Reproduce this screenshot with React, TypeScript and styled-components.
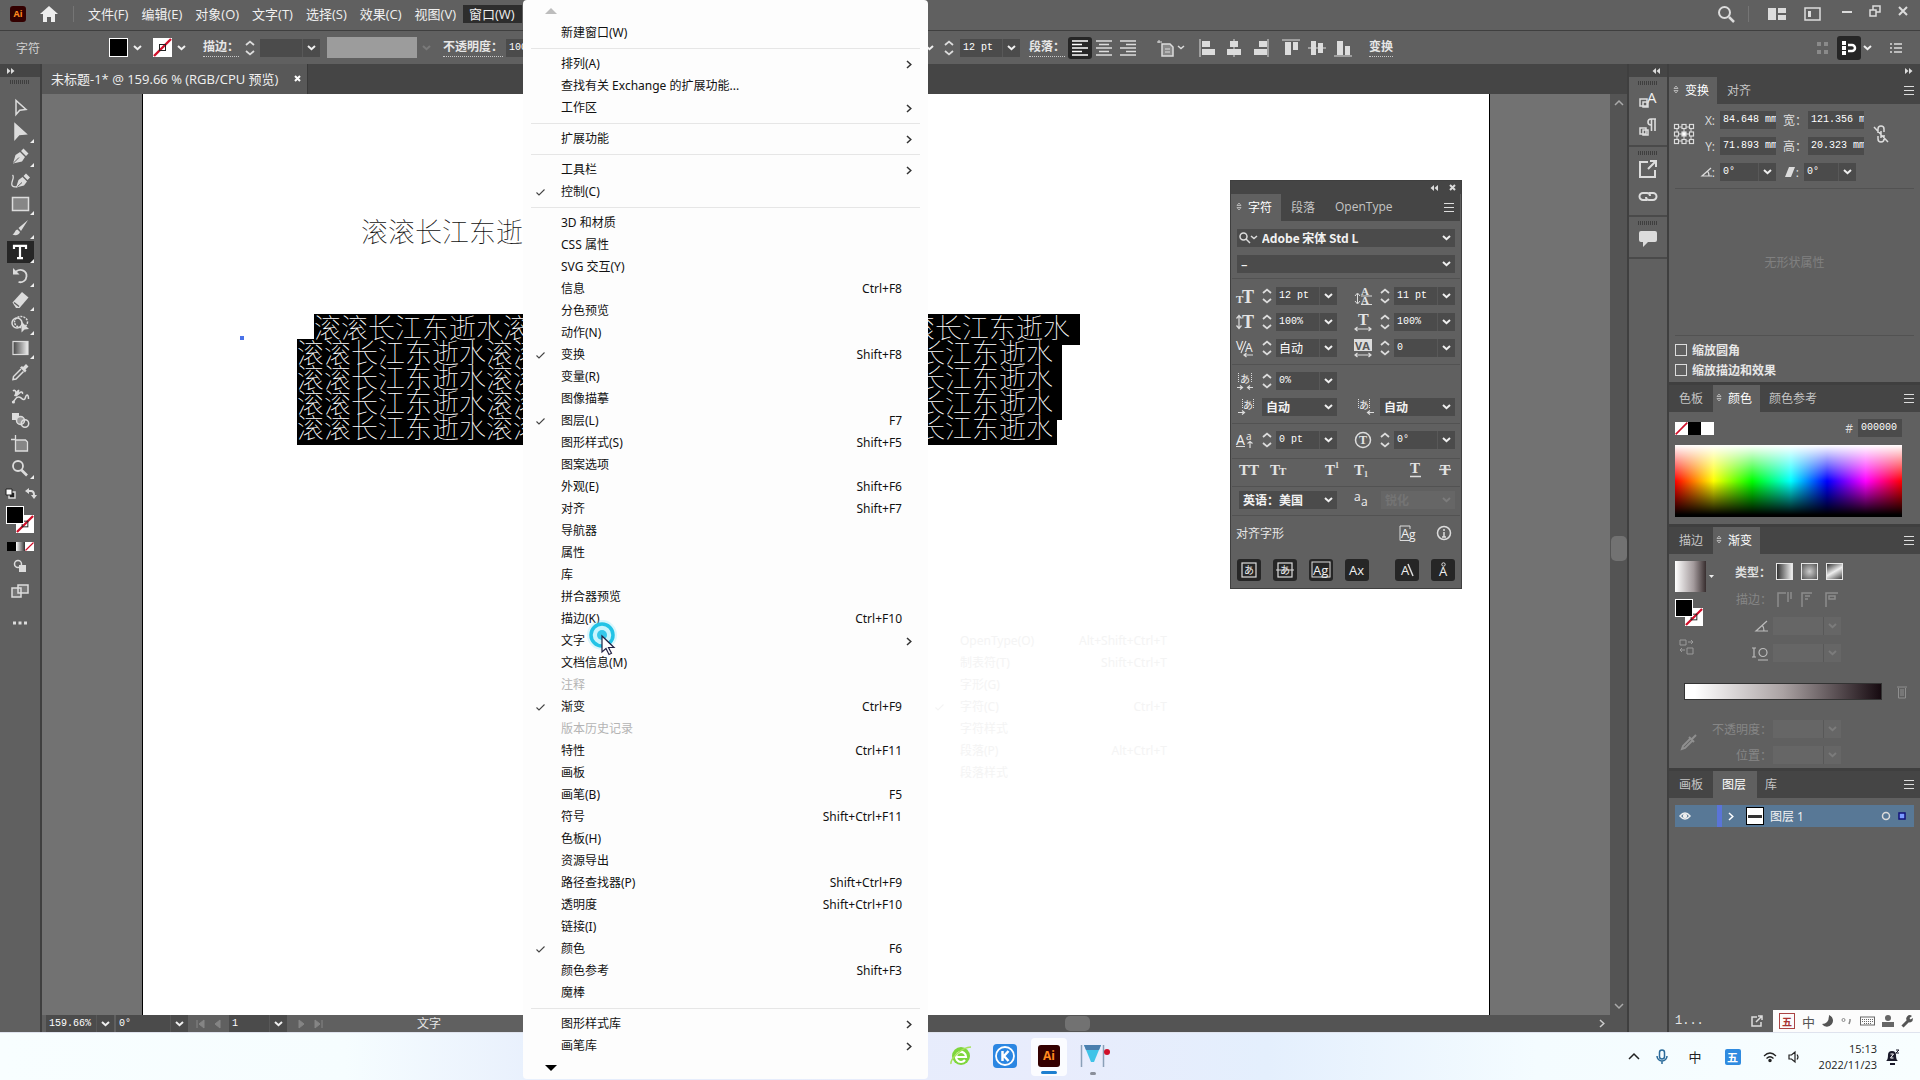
import React, { ReactNode } from "react";
import styled, { createGlobalStyle, css } from "styled-components";

const ui = `"Open Sans", "Noto Sans CJK SC", sans-serif`;
const mono = `"Liberation Mono", "Noto Sans CJK SC", monospace`;
const c = {
  panel: "#606060",
  bar: "#454545",
  field: "#4b4b4b",
  line: "#3f3f3f",
  edge: "#525252",
  text: "#e6e6e6",
  dim: "#868686",
};

const GlobalStyle = createGlobalStyle`
  * { box-sizing: border-box; }
  body { margin: 0; overflow: hidden; background: #707070; font-family: ${ui}; font-size: 12px; color: ${c.text}; }
  button, input, select { font: inherit; color: inherit; border: 0; padding: 0; margin: 0; background: none; }
  ul { list-style: none; margin: 0; padding: 0; }
`;

/* ---------- shell ---------- */
const Page = styled.div`
  display: flex;
  flex-direction: column;
  height: 100vh;
  position: relative;
`;
const Center = css`
  display: flex;
  align-items: center;
  justify-content: center;
`;
const Svg = styled.svg`
  display: block;
  flex: none;
  overflow: visible;
`;
const IconButton = styled.button<{ $w?: number; $h?: number; $on?: boolean }>`
  ${Center}
  flex: none;
  width: ${(p) => p.$w ?? 24}px;
  height: ${(p) => p.$h ?? 22}px;
  border-radius: 3px;
  background: ${(p) => (p.$on ? "#262626" : "transparent")};
`;

type IconProps = { w?: number; h?: number; children: ReactNode; color?: string };
const Icon = ({ w = 18, h = 18, children, color = "#dcdcdc" }: IconProps) => (
  <Svg width={w} height={h} viewBox={`0 0 ${w} ${h}`} fill="none" stroke={color} strokeWidth="1.5" aria-hidden="true">
    {children}
  </Svg>
);
const Chevron = ({ color = "#f0f0f0" }: { color?: string }) => (
  <Icon w={9} h={6} color={color}>
    <path d="M1 1l3.5 3.2L8 1" strokeWidth="2" />
  </Icon>
);
const RightChevron = ({ color = "#333" }: { color?: string }) => (
  <Icon w={6} h={9} color={color}>
    <path d="M1 1l3.8 3.5L1 8" />
  </Icon>
);
const Stepper = () => (
  <Icon w={10} h={16}>
    <path d="M1 5l4-3.4L9 5M1 11l4 3.4L9 11" strokeWidth="1.8" />
  </Icon>
);
const Burger = () => (
  <Icon w={10} h={9}>
    <path d="M0 .5h10M0 4.5h10M0 8.5h10" strokeWidth="1" />
  </Icon>
);
const TabArrows = () => (
  <Icon w={6} h={9} color="#b5b5b5">
    <path d="M1 3.5L3 1l2 2.5zM1 5.5L3 8l2-2.5z" strokeWidth="1" />
  </Icon>
);
const DoubleArrow = ({ left }: { left?: boolean }) => (
  <Icon w={8} h={6}>
    {left ? (
      <path d="M4 0v6L.5 3zM8 0v6L4.500 3z" fill="#dcdcdc" stroke="none" />
    ) : (
      <path d="M0 0v6l3.500-3zM4 0v6l3.500-3z" fill="#dcdcdc" stroke="none" />
    )}
  </Icon>
);
const Grip = styled.div`
  width: 20px;
  height: 4px;
  margin: 0 auto;
  background: repeating-linear-gradient(90deg, #3e3e3e 0 1px, transparent 1px 2px);
`;

/* ---------- menu bar ---------- */
const MenuBar = styled.header`
  display: flex;
  align-items: center;
  flex: none;
  height: 31px;
  padding: 0 0 3px 10px;
  background: ${c.panel};
  border-bottom: 1px solid ${c.line};
`;
const AiMark = styled.span<{ $s: number }>`
  ${Center}
  flex: none;
  width: ${(p) => p.$s}px;
  height: ${(p) => p.$s}px;
  border-radius: 3px;
  background: #330000;
  color: #ff8a1e;
  font-weight: 700;
  font-size: ${(p) => (p.$s > 18 ? 12 : 9)}px;
  line-height: 1;
`;
const Rule = styled.span<{ $m: number }>`
  width: 1px;
  height: 16px;
  margin: 0 ${(p) => p.$m}px;
  background: #757575;
`;
const MenuTitle = styled.button<{ $on?: boolean }>`
  height: 18px;
  padding: 0 7px 0 6px;
  font-size: 13px;
  line-height: 16px;
  white-space: nowrap;
  color: #f0f0f0;
  background: ${(p) => (p.$on ? "#2d2d2d" : "transparent")};
`;
const Push = styled.div`
  display: flex;
  align-items: center;
  margin-left: auto;
`;
const WindowKeys = styled.div`
  display: flex;
  align-self: flex-start;
`;

/* ---------- control bar ---------- */
const ControlBar = styled.div`
  display: flex;
  align-items: center;
  flex: none;
  height: 33px;
  background: ${c.panel};
`;
const ControlLeft = styled.div`
  display: flex;
  align-items: center;
  flex: none;
  width: 920px;
  padding-left: 16px;
`;
const Cluster = styled.div<{ $r: number }>`
  display: flex;
  align-items: center;
  flex: none;
  margin-right: ${(p) => p.$r}px;
`;
const ContextName = styled.span`
  width: 93px;
  color: #d0d0d0;
`;
const LinkLabel = styled.label`
  height: 18px;
  line-height: 16px;
  font-weight: 700;
  white-space: nowrap;
  color: inherit;
  text-decoration: none;
  border-bottom: 1px dotted #c8c8c8;
`;
const Swatch = styled.span<{ $s?: number }>`
  display: block;
  flex: none;
  width: ${(p) => p.$s ?? 19}px;
  height: ${(p) => p.$s ?? 19}px;
  background: #000;
  border: 1px solid #fff;
`;
const NoneSwatch = ({ s = 19, hole = true }: { s?: number; hole?: boolean }) => (
  <Svg width={s} height={s} viewBox="0 0 19 19" aria-hidden="true">
    <rect width="19" height="19" fill="#fff" />
    <path d="M1 18L18 1" stroke="#d0102a" strokeWidth="2.4" />
    {hole && <rect x="6.500" y="6.500" width="6" height="6" fill="none" stroke="#222" />}
  </Svg>
);
const StyleBox = styled.span`
  width: 90px;
  height: 21px;
  background: #9c9c9c;
`;
const FieldBox = styled.div<{ $w: number; $off?: boolean }>`
  display: flex;
  align-items: center;
  flex: none;
  position: relative;
  width: ${(p) => p.$w}px;
  height: 18px;
  background: ${(p) => (p.$off ? "#666" : c.field)};
  input {
    flex: 1;
    min-width: 0;
    height: 18px;
    padding: 0 0 1px 3px;
    font-family: ${mono};
    font-size: 10px;
    color: #fff;
  }
  input.cjk { font-size: 12px; }
  select {
    appearance: none;
    flex: 1;
    min-width: 0;
    height: 18px;
    padding: 0 0 0 4px;
    font-family: "Noto Sans CJK SC", sans-serif;
    font-size: 12px;
    line-height: 18px;
    font-weight: 700;
    color: ${(p) => (p.$off ? "#747474" : "#f2f2f2")};
    opacity: 1;
  }
`;
const Drop = styled.button`
  ${Center}
  flex: none;
  width: 18px;
  height: 18px;
  border-left: 1px solid #585858;
`;
const DropMark = styled.span`
  ${Center}
  flex: none;
  width: 18px;
  pointer-events: none;
`;

type FieldProps = { label: string; value: string; w: number; drop?: boolean; off?: boolean; cjk?: boolean };
const Field = ({ label, value, w, drop = true, off, cjk }: FieldProps) => (
  <FieldBox $w={w} $off={off}>
    <input aria-label={label} defaultValue={value} disabled={off} className={cjk ? "cjk" : undefined} />
    {drop && (
      <Drop aria-label={`${label}选项`} disabled={off}>
        <Chevron color={off ? "#7c7c7c" : undefined} />
      </Drop>
    )}
  </FieldBox>
);
const Choice = ({ label, value, w, off }: FieldProps) => (
  <FieldBox $w={w} $off={off}>
    <select aria-label={label} disabled={off}>
      <option>{value}</option>
    </select>
    <DropMark>
      <Chevron color={off ? "#7c7c7c" : undefined} />
    </DropMark>
  </FieldBox>
);

const alignShapes: [string, string][] = [
  ["左对齐", "M1 0v18|M3 2h8v6H3zM3 10h13v6H3z"],
  ["水平居中", "M9 0v18|M5 2h8v6H5zM2 10h14v6H2z"],
  ["右对齐", "M17 0v18|M8 2h8v6H8zM3 10h13v6H3z"],
  ["顶对齐", "M0 1h18|M3 3h6v13H3zM11 3h5v8h-5z"],
  ["垂直居中", "M0 9h18|M3 2h5v14H3zM10 4h5v10h-5z"],
  ["底对齐", "M0 17h18|M3 2h6v14H3zM11 7h5v9h-5z"],
];

/* ---------- workspace ---------- */
const Workspace = styled.div`
  display: flex;
  flex: 1;
  min-height: 0;
`;
const Strip = styled.div<{ $right?: boolean }>`
  display: flex;
  align-items: center;
  justify-content: ${(p) => (p.$right ? "flex-end" : "flex-start")};
  flex: none;
  height: 13px;
  padding: 0 7px;
  background: ${c.bar};
`;
const Toolbox = styled.nav`
  display: flex;
  flex-direction: column;
  flex: none;
  width: 42px;
  background: ${c.panel};
  border-right: 2px solid ${c.line};
`;
const ToolTop = styled.div`
  padding-top: 3px;
`;
const ToolList = styled.div`
  display: flex;
  flex-direction: column;
  align-items: center;
  padding-top: 12px;
`;
const Tool = styled.button<{ $on?: boolean }>`
  ${Center}
  position: relative;
  width: 27px;
  height: 24px;
  background: ${(p) => (p.$on ? "#262626" : "transparent")};
  background-clip: content-box;
  padding: 1px 0;
`;
const Corner = styled.i`
  position: absolute;
  right: 0;
  bottom: 1px;
  border: 2px solid transparent;
  border-right-color: #eee;
  border-bottom-color: #eee;
`;
const SmallPair = styled.div`
  display: flex;
  justify-content: space-between;
  width: 31px;
  margin-top: 8px;
`;
const PaintPair = styled.div`
  position: relative;
  width: 28px;
  height: 28px;
  margin-top: 7px;
`;
const Layered = styled.span<{ $x: number; $y: number }>`
  position: absolute;
  left: ${(p) => p.$x}px;
  top: ${(p) => p.$y}px;
`;
const Modes = styled.div`
  display: flex;
  width: 27px;
  height: 9px;
  margin-top: 8px;
  span { flex: 1; background: #000; }
  span + span { background: linear-gradient(90deg, #fff, #333); }
`;
const ModeTool = styled.button<{ $t?: number }>`
  ${Center}
  width: 27px;
  height: 25px;
  margin-top: ${(p) => p.$t ?? 0}px;
`;
const Document = styled.main`
  display: flex;
  flex-direction: column;
  flex: 1;
  min-width: 0;
`;
const DocTabs = styled.div`
  display: flex;
  flex: none;
  height: 30px;
  background: ${c.bar};
`;
const DocTab = styled.div`
  display: flex;
  align-items: center;
  gap: 16px;
  padding: 0 6px 1px 9px;
  background: #585858;
  border-right: 1px solid #393939;
  white-space: nowrap;
  font-size: 13px;
  color: #f0f0f0;
`;
const DocArea = styled.div`
  display: flex;
  flex: 1;
  min-height: 0;
`;
const Pasteboard = styled.div`
  flex: 1;
  min-width: 0;
  padding: 0 120px 0 100px;
  background: #727272;
`;
const Artboard = styled.div`
  position: relative;
  height: 100%;
  background: #fff;
  border: 1px solid #000;
  border-width: 0 1px;
`;
const song = css`
  font-family: "Noto Sans CJK SC", sans-serif;
  font-weight: 100;
  font-size: 27px;
  white-space: nowrap;
`;
const PointText = styled.div`
  ${song}
  position: absolute;
  left: 218px;
  top: 122px;
  line-height: 30px;
  color: #111;
`;
const AreaText = styled.div`
  position: absolute;
  left: 153px;
  top: 220px;
`;
const TextLine = styled.div<{ $in: number; $pad: number }>`
  ${song}
  width: max-content;
  height: 31px;
  margin: 0 0 -6px ${(p) => p.$in}px;
  padding-right: ${(p) => p.$pad}px;
  line-height: 25px;
  color: #fff;
  background: #000;
`;
const Anchor = styled.span`
  position: absolute;
  left: 97px;
  top: 242px;
  width: 4px;
  height: 4px;
  background: #4a72e8;
`;
const VScroll = styled.div`
  display: flex;
  flex-direction: column;
  align-items: center;
  justify-content: space-between;
  width: 17px;
  padding: 6px 0;
  background: #545454;
`;
const Thumb = styled.span<{ $w: number; $h: number; $b?: number; $l?: number }>`
  flex: none;
  width: ${(p) => p.$w}px;
  height: ${(p) => p.$h}px;
  margin: 0 0 ${(p) => p.$b ?? 0}px ${(p) => p.$l ?? 0}px;
  border-radius: 5px;
  background: #727272;
`;
const Status = styled.footer`
  display: flex;
  align-items: center;
  flex: none;
  height: 17px;
  padding-left: 4px;
  overflow: hidden;
  background: ${c.panel};
`;
const StatusHint = styled.span`
  width: 122px;
  margin-left: 84px;
  line-height: 17px;
`;
const HScroll = styled.div`
  display: flex;
  align-items: center;
  justify-content: space-between;
  flex: 1;
  height: 17px;
  padding: 0 22px 0 0;
  background: #545454;
`;

/* ---------- floating character panel ---------- */
const Floating = styled.section`
  position: absolute;
  left: 1087px;
  top: 86px;
  width: 232px;
  padding: 0 1px;
  background: ${c.panel};
  border: 1px solid ${c.line};
`;
const FloatHead = styled.div`
  display: flex;
  align-items: center;
  justify-content: flex-end;
  gap: 11px;
  height: 13px;
  margin: 0 -1px;
  padding-right: 5px;
  background: ${c.bar};
`;
const Tabs = styled.div`
  display: flex;
  align-items: stretch;
  flex: none;
  height: 27px;
  background: ${c.bar};
`;
const Tab = styled.button<{ $on?: boolean; $l: number; $r: number }>`
  display: flex;
  align-items: center;
  gap: 6px;
  padding: 0 ${(p) => p.$r}px 2px ${(p) => p.$l}px;
  white-space: nowrap;
  color: ${(p) => (p.$on ? "#fff" : "#c4c4c4")};
  background: ${(p) => (p.$on ? c.panel : "transparent")};
`;
const TabMenu = styled.button`
  margin-left: auto;
  padding: 0 6px;
`;
const Section = styled.div<{ $t: number; $b: number }>`
  padding: ${(p) => p.$t}px 4px ${(p) => p.$b}px 0;
  border-bottom: 1px solid ${c.edge};
`;
const Row = styled.div<{ $pad?: number }>`
  display: flex;
  align-items: center;
  height: 26px;
  padding-left: ${(p) => p.$pad ?? 0}px;
`;
const Half = styled.div`
  display: flex;
  align-items: center;
  width: 118px;
  flex: none;
`;
const Cell = styled.span<{ $w: number }>`
  ${Center}
  flex: none;
  width: ${(p) => p.$w}px;
`;
const Between = styled.div<{ $l: number; $r: number; $h: number }>`
  display: flex;
  align-items: center;
  justify-content: space-between;
  height: ${(p) => p.$h}px;
  padding: 0 ${(p) => p.$r}px 0 ${(p) => p.$l}px;
`;
const SnapRow = styled.div`
  display: flex;
  align-items: center;
  justify-content: space-between;
  height: 26px;
  margin: 7px 0 5px;
  padding: 0 5px;
`;
const SearchField = styled(FieldBox)`
  padding-left: 2px;
`;
const GlyphText = ({ x, y, s, children }: { x: number; y: number; s: number; children: ReactNode }) => (
  <text x={x} y={y} fontSize={s} fontFamily="Liberation Serif, serif" fontWeight="700" fill="#e4e4e4" stroke="none">
    {children}
  </text>
);
const SansText = ({ x, y, s, children }: { x: number; y: number; s: number; children: ReactNode }) => (
  <text x={x} y={y} fontSize={s} fontFamily="Open Sans, Noto Sans CJK SC, sans-serif" fill="#f0f0f0" stroke="none">
    {children}
  </text>
);
const Measure = ({ label, icon, value, cjk }: { label: string; icon: ReactNode; value: string; cjk?: boolean }) => (
  <Half>
    <Cell $w={26}><Icon>{icon}</Icon></Cell>
    <Cell $w={18}><Stepper /></Cell>
    <Field label={label} value={value} w={61} cjk={cjk} />
  </Half>
);

/* ---------- dock ---------- */
const Dock = styled.aside`
  display: flex;
  flex-direction: column;
  flex: none;
  width: 42px;
  background: ${c.panel};
  border-left: 2px solid ${c.line};
  border-right: 2px solid ${c.line};
`;
const DockGroup = styled.div`
  padding: 4px 0;
  border-bottom: 2px solid #4a4a4a;
`;
const DockButton = styled.button`
  ${Center}
  width: 38px;
  height: 28px;
`;
const Panels = styled.aside`
  display: flex;
  flex-direction: column;
  flex: none;
  width: 251px;
  background: ${c.panel};
`;
const Panel = styled.section`
  border-bottom: 3px solid ${c.line};
`;
const TransformBody = styled.div`
  display: flex;
  align-items: flex-start;
  padding: 3px 6px 0 5px;
`;
const Tall = styled.div<{ $h: number; $w: number }>`
  ${Center}
  width: ${(p) => p.$w}px;
  height: ${(p) => p.$h}px;
`;
const FieldLabel = styled.label<{ $w: number; $off?: boolean }>`
  display: flex;
  align-items: center;
  justify-content: flex-end;
  flex: none;
  width: ${(p) => p.$w}px;
  padding-right: 5px;
  white-space: nowrap;
  color: ${(p) => (p.$off ? c.dim : "#dedede")};
`;
const WideLabel = styled(FieldLabel)`
  padding-right: 1px;
`;
const Empty = styled.p`
  ${Center}
  height: 148px;
  margin: 3px 6px 0;
  border: 1px solid ${c.edge};
  border-width: 1px 0;
  color: #808080;
`;
const CheckList = styled.div`
  padding: 4px 0 2px;
`;
const Check = styled.label`
  display: flex;
  align-items: center;
  gap: 5px;
  height: 20px;
  padding-left: 6px;
  font-weight: 700;
  input {
    appearance: none;
    width: 12px;
    height: 12px;
    border: 1px solid #dcdcdc;
  }
`;
const ColorBody = styled.div`
  padding: 6px 18px 7px 6px;
`;
const ColorTop = styled.div`
  display: flex;
  align-items: center;
  height: 20px;
  margin-bottom: 7px;
`;
const Chip = styled.span<{ $c: string }>`
  width: 13px;
  height: 13px;
  background: ${(p) => p.$c};
`;
const Spectrum = styled.div`
  height: 72px;
  background: linear-gradient(180deg, #fff 0%, rgba(255, 255, 255, 0) 50%, rgba(0, 0, 0, 0) 50%, #000 97%),
    linear-gradient(90deg, #f00, #ff0 17%, #0f0 34%, #0ff 51%, #00f 67%, #f0f 84%, #f00);
`;
const GradientBody = styled.div`
  display: flex;
  padding: 4px 0 0 6px;
`;
const GradientSide = styled.div`
  width: 40px;
  padding-top: 3px;
`;
const GradRow = styled.div`
  display: flex;
  align-items: center;
  height: 27px;
`;
const GradPreview = styled.div`
  display: flex;
  align-items: center;
  gap: 3px;
  span { width: 31px; height: 31px; background: linear-gradient(90deg, #fff, #a39a9c 60%, #382e2f); }
`;
const TypeSwatch = styled.button<{ $bg: string }>`
  width: 17px;
  height: 17px;
  margin-right: 8px;
  border: 1px solid #e6e6e6;
  background: ${(p) => p.$bg};
`;
const RampRow = styled.div`
  display: flex;
  align-items: center;
  justify-content: space-between;
  padding: 16px 13px 16px 15px;
`;
const Ramp = styled.div`
  width: 198px;
  height: 17px;
  border: 1px solid #333;
  background: linear-gradient(90deg, #fff 5%, #aaa2a3 50%, #160a10);
`;
const GradientFoot = styled.div`
  display: flex;
  padding-left: 6px;
`;
const LayersPanel = styled.section`
  display: flex;
  flex-direction: column;
  flex: 1;
  min-height: 0;
`;
const LayerRow = styled.div`
  display: flex;
  align-items: center;
  height: 22px;
  margin: 7px 6px 0 6px;
  background: #587896;
  color: #f4f4f4;
`;
const LayerFoot = styled.div`
  display: flex;
  align-items: center;
  gap: 47px;
  height: 22px;
  margin-top: auto;
  padding-left: 6px;
  font-family: ${mono};
  font-size: 12px;
`;
const Bar = styled.span`
  width: 5px;
  height: 22px;
  background: #5a74d8;
`;
const LayerThumb = styled.span`
  ${Center}
  width: 18px;
  height: 18px;
  margin-right: 6px;
  background: #fff;
  border: 1px solid #000;
  i { width: 14px; height: 3px; background: #333; }
`;
const Ime = styled.div`
  display: flex;
  align-items: center;
  justify-content: space-between;
  position: absolute;
  right: 0;
  bottom: 48px;
  width: 147px;
  height: 22px;
  padding: 0 6px;
  background: #fcfcfc;
  color: #555;
  font-size: 13px;
`;
const ImeMark = styled.b`
  ${Center}
  width: 16px;
  height: 16px;
  border: 1px solid #a44;
  color: #a33;
  font-size: 10px;
`;

/* ---------- taskbar ---------- */
const Taskbar = styled.footer`
  display: flex;
  align-items: center;
  flex: none;
  height: 48px;
  padding-right: 20px;
  border-top: 1px solid #dfe3ee;
  background: linear-gradient(90deg, #f8feff 0, #f6fdff 18%, #e5edfc 30%, #e8ecfc 55%, #e4effd 66%, #f4fcff 80%, #f8feff);
  color: #222;
`;
const Apps = styled.div`
  display: flex;
  align-items: center;
  flex: 1;
  padding-left: calc(50% - 11px);
`;
const AppButton = styled.button<{ $on?: boolean }>`
  ${Center}
  flex-direction: column;
  gap: 4px;
  width: 36px;
  height: 38px;
  margin: 0 4px;
  padding-top: 5px;
  border-radius: 4px;
  background: ${(p) => (p.$on ? "#fbfcff" : "transparent")};
`;
const Run = styled.i<{ $w: number; $c: string }>`
  width: ${(p) => p.$w}px;
  height: 3px;
  border-radius: 2px;
  background: ${(p) => p.$c};
`;
const Tray = styled.div`
  display: flex;
  align-items: center;
`;
const TrayItem = styled.button<{ $w: number }>`
  ${Center}
  width: ${(p) => p.$w}px;
  height: 30px;
  font-size: 13px;
`;
const Wubi = styled.b`
  ${Center}
  width: 16px;
  height: 16px;
  border-radius: 2px;
  background: #2f8be0;
  color: #fff;
  font-size: 11px;
`;
const Clock = styled.time`
  width: 72px;
  margin-right: 8px;
  text-align: right;
  font-size: 11px;
  line-height: 16px;
`;

/* ---------- window menu ---------- */
const Popup = styled.div<{ $x: number; $y: number; $w: number }>`
  position: absolute;
  left: ${(p) => p.$x}px;
  top: ${(p) => p.$y}px;
  width: ${(p) => p.$w}px;
  font-family: "Noto Sans", "Noto Sans CJK SC", sans-serif;
`;
const WindowMenu = styled(Popup)`
  bottom: 1px;
  background: #fdfdfd;
  border-radius: 4px;
  color: #111;
`;
const ScrollHint = styled.div`
  display: flex;
  align-items: center;
  height: 22px;
  padding-left: 22px;
`;
const Separator = styled.li`
  height: 9px;
  padding: 4px 8px;
  &::before { content: ""; display: block; height: 1px; background: #e6e6e6; }
`;
const Item = styled.button<{ $faint?: boolean }>`
  display: flex;
  align-items: center;
  width: 100%;
  height: 22px;
  padding-right: 16px;
  text-align: left;
  line-height: 20px;
  white-space: nowrap;
  color: ${(p) => (p.$faint ? "#f4f4f4" : "inherit")};
  &:disabled { color: #b4b4b4; }
`;
const CheckCell = styled.span`
  width: 25px;
  margin-left: 13px;
  flex: none;
`;
const ItemName = styled.span`
  flex: 1;
`;
const Keys = styled.span`
  margin-right: 10px;
`;
const Pointer = styled(Popup)`
  pointer-events: none;
`;

type Entry = { n: string; k?: string; on?: boolean; sub?: boolean; off?: boolean } | null;
const entries: Entry[] = [
  { n: "新建窗口(W)" }, null,
  { n: "排列(A)", sub: true }, { n: "查找有关 Exchange 的扩展功能..." }, { n: "工作区", sub: true }, null,
  { n: "扩展功能", sub: true }, null,
  { n: "工具栏", sub: true }, { n: "控制(C)", on: true }, null,
  { n: "3D 和材质" }, { n: "CSS 属性" }, { n: "SVG 交互(Y)" }, { n: "信息", k: "Ctrl+F8" }, { n: "分色预览" },
  { n: "动作(N)" }, { n: "变换", k: "Shift+F8", on: true }, { n: "变量(R)" }, { n: "图像描摹" },
  { n: "图层(L)", k: "F7", on: true }, { n: "图形样式(S)", k: "Shift+F5" }, { n: "图案选项" },
  { n: "外观(E)", k: "Shift+F6" }, { n: "对齐", k: "Shift+F7" }, { n: "导航器" }, { n: "属性" }, { n: "库" },
  { n: "拼合器预览" }, { n: "描边(K)", k: "Ctrl+F10" }, { n: "文字", sub: true }, { n: "文档信息(M)" },
  { n: "注释", off: true }, { n: "渐变", k: "Ctrl+F9", on: true }, { n: "版本历史记录", off: true },
  { n: "特性", k: "Ctrl+F11" }, { n: "画板" }, { n: "画笔(B)", k: "F5" }, { n: "符号", k: "Shift+Ctrl+F11" },
  { n: "色板(H)" }, { n: "资源导出" }, { n: "路径查找器(P)", k: "Shift+Ctrl+F9" },
  { n: "透明度", k: "Shift+Ctrl+F10" }, { n: "链接(I)" }, { n: "颜色", k: "F6", on: true },
  { n: "颜色参考", k: "Shift+F3" }, { n: "魔棒" }, null,
  { n: "图形样式库", sub: true }, { n: "画笔库", sub: true },
];
const typeEntries: Entry[] = [
  { n: "OpenType(O)", k: "Alt+Shift+Ctrl+T" }, { n: "制表符(T)", k: "Shift+Ctrl+T" }, { n: "字形(G)" },
  { n: "字符(C)", k: "Ctrl+T", on: true }, { n: "字符样式" }, { n: "段落(P)", k: "Alt+Ctrl+T" }, { n: "段落样式" },
];
const Entries = ({ list, faint }: { list: Entry[]; faint?: boolean }) => (
  <ul>
    {list.map((e, i) =>
      e === null ? (
        <Separator key={i} />
      ) : (
        <li key={i}>
          <Item disabled={e.off} $faint={faint}>
            <CheckCell>
              {e.on && (
                <Icon w={9} h={7} color={faint ? "#f4f4f4" : "#444"}>
                  <path d="M.5 3.500L3 6l5.500-5.500" strokeWidth="1.100" />
                </Icon>
              )}
            </CheckCell>
            <ItemName>{e.n}</ItemName>
            {e.k && <Keys>{e.k}</Keys>}
            {e.sub && <RightChevron />}
          </Item>
        </li>
      )
    )}
  </ul>
);

const F = "#dcdcdc";
const tools: { n: string; more?: boolean; on?: boolean; d: ReactNode }[] = [
  { n: "选择工具", d: <path d="M5 1.500v14l3.700-4.200 6.300-.8z" /> },
  { n: "直接选择工具", more: true, d: <path d="M4 1v15l4-4.500 7-.5z" fill={F} /> },
  { n: "钢笔工具", more: true, d: (<><path d="M2 16.500L4.500 8l4.500-3 5 5-3 4.500zM10 4l2.500-2.500 5 5L15 9z" fill={F} stroke="none" /><path d="M2.500 16L8 10.500" stroke="#606060" strokeWidth="1" /></>) },
  { n: "曲率工具", d: (<><path d="M5 16.500L7.500 9l4-3 4.500 4.500-3 4zM12.500 5L15 2.500l4 4-2.500 2.500z" fill={F} stroke="none" /><path d="M6 16l5-4.500" stroke="#606060" strokeWidth="1" /><path d="M1.500 4c3 3-3 8 0 11 1.500 1.500 3 1 5 .5" strokeWidth="1.300" /></>) },
  { n: "矩形工具", more: true, d: <rect x="1.500" y="2.500" width="16" height="13" fill="#868686" /> },
  { n: "画笔工具", more: true, d: <path d="M17 1L7.500 9l2.500 3zM6.500 10.500c-2.500 0-2.500 4-5 5 3 1.500 7 .5 7.500-2.500z" fill={F} stroke="none" /> },
  { n: "文字工具", more: true, on: true, d: <path d="M3 6V2.800h12V6M9 3v12M6 15.200h6" strokeWidth="2.200" stroke="#fff" /> },
  { n: "旋转工具", more: true, d: (<><path d="M5 4.500C10 1 16 4 15.500 9.500c-.3 4-4 6.500-8 5.500" strokeWidth="1.800" /><path d="M2 1v6.500h6.500z" fill={F} stroke="none" /></>) },
  { n: "橡皮擦工具", more: true, d: (<><path d="M1.500 11.500L11 1l6.500 5.500L8.500 17H5z" fill={F} stroke="none" /><path d="M3 11.500l5 4" stroke="#606060" /></>) },
  { n: "形状生成器工具", more: true, d: (<><ellipse cx="6" cy="8" rx="5" ry="5" /><ellipse cx="10" cy="7" rx="6.500" ry="5.500" strokeDasharray="2 1" /><path d="M10.500 6.500v11l3-3 4.500-.5z" fill={F} stroke="none" /></>) },
  { n: "渐变工具", more: true, d: (<><defs><linearGradient id="tg"><stop offset="0" stopColor="#444" /><stop offset="1" stopColor="#eee" /></linearGradient></defs><rect x="2" y="2.500" width="15" height="13" fill="url(#tg)" strokeWidth="1.200" /></>) },
  { n: "吸管工具", d: (<><path d="M10 6L2.500 13.500l-.5 3 3-.5L12.500 8.500" /><path d="M9 4.500L11 3l1 1 3-3 2.500 2.500-3 3 1 1-1.500 2z" fill={F} stroke="none" /></>) },
  { n: "操控变形工具", d: (<><path d="M1 15.500c3-1 3-6 7-5.500 3 .5 3 3 5 2.500 2-.5 1-4 3-4.500 1.500 0 1.500 2 1.500 4M2 4c1.500-1.500 3 0 3 2s2 2 3.500 0 3.500-1 3 1" /><path d="M3 9c1-3 3-6 5-6.500 1 1 0 4-2 7z" fill={F} stroke="none" /><circle cx="2.500" cy="15" r="1.500" fill={F} stroke="none" /></>) },
  { n: "混合工具", d: (<><path d="M1 2h7v7H1z" fill={F} stroke="none" /><circle cx="9.500" cy="9.500" r="4" fill="#999" /><circle cx="14" cy="12.500" r="3.700" /></>) },
  { n: "画板工具", d: (<><path d="M4.500 0v7M0 4.500h4M4.500 5h10l2 2v9h-12z" fill="#868686" strokeWidth="1.300" /></>) },
  { n: "缩放工具", more: true, d: (<><circle cx="7" cy="7" r="5" strokeWidth="1.800" /><path d="M10.500 11l5.500 5.500" strokeWidth="2.600" /></>) },
];
const menus = ["文件(F)", "编辑(E)", "对象(O)", "文字(T)", "选择(S)", "效果(C)", "视图(V)", "窗口(W)"];
const verse = "滚滚长江东逝水".repeat(4);
const lines = [[18, 10], [1, 9], [1, 9], [1, 9], [1, 4]];

const PaintSwatches = () => (
  <PaintPair>
    <Layered $x={10} $y={9}><NoneSwatch s={18} /></Layered>
    <Layered $x={0} $y={0}><Swatch $s={18} /></Layered>
  </PaintPair>
);

const CharacterPanel = () => (
  <Floating aria-label="字符">
    <FloatHead>
      <DoubleArrow left />
      <Icon w={7} h={7}><path d="M1 1l5 5M6 1L1 6" strokeWidth="2" /></Icon>
    </FloatHead>
    <Tabs>
      <Tab $on $l={4} $r={9}><TabArrows />字符</Tab>
      <Tab $l={10} $r={10}>段落</Tab>
      <Tab $l={10} $r={10}>OpenType</Tab>
      <TabMenu aria-label="面板菜单"><Burger /></TabMenu>
    </Tabs>
    <Section $t={4} $b={1}>
      <Row $pad={5}>
        <SearchField $w={218}>
          <Icon w={19} h={12}><circle cx="4.500" cy="4.500" r="3.500" /><path d="M7 7l4 4M12 4l3 2.500L18 4" /></Icon>
          <select aria-label="字体"><option>Adobe 宋体 Std L</option></select>
          <DropMark><Chevron /></DropMark>
        </SearchField>
      </Row>
      <Row $pad={5}><Choice label="字体样式" value="–" w={218} /></Row>
    </Section>
    <Section $t={4} $b={3}>
      <Row>
        <Measure label="字号" value="12 pt" icon={<><GlyphText x={0} y={16} s={11}>T</GlyphText><GlyphText x={6} y={16} s={18}>T</GlyphText></>} />
        <Measure label="行距" value="11 pt" icon={<><GlyphText x={7} y={8} s={11}>A</GlyphText><GlyphText x={7} y={17} s={11}>A</GlyphText><path d="M7 9h11M7 17.500h11M3.500 7v9M1 9l2.500-3L6 9M1 14l2.500 3L6 14" strokeWidth="1" /></>} />
      </Row>
      <Row>
        <Measure label="垂直缩放" value="100%" icon={<><GlyphText x={6} y={15} s={18}>T</GlyphText><path d="M3 3v12M.5 5.500L3 2.500l2.500 3M.5 12.500L3 15.500l2.500-3" strokeWidth="1.200" /></>} />
        <Measure label="水平缩放" value="100%" icon={<><GlyphText x={4} y={12} s={16}>T</GlyphText><path d="M1 16h16M3.500 14L1 16l2.500 2M14.500 14l2.500 2-2.500 2" strokeWidth="1.200" /></>} />
      </Row>
      <Row>
        <Measure cjk label="字偶间距" value="自动" icon={<><SansText x={0} y={11} s={12}>V</SansText><SansText x={9} y={13} s={12}>A</SansText><path d="M5 14L10 2M8 16h9M10.500 14L8 16l2.500 2" strokeWidth="1.200" /></>} />
        <Measure label="字符间距" value="0" icon={<><rect x="0" y="0" width="18" height="12" fill="#dcdcdc" stroke="none" /><text x="1" y="10.500" fontSize="11" fontWeight="700" fontFamily="Open Sans" fill="#555" stroke="none">VA</text><path d="M1 16h16M3.500 14L1 16l2.500 2M14.500 14l2.500 2-2.500 2" strokeWidth="1.200" /></>} />
      </Row>
    </Section>
    <Section $t={3} $b={3}>
      <Row>
        <Measure label="比例间距" value="0%" icon={<><SansText x={4} y={11} s={10}>あ</SansText><path d="M2.500 1v10M15.500 1v10" strokeDasharray="1 1" strokeWidth="1" /><path d="M1 15.500h5M4 13.500l2.500 2-2.500 2M17 15.500h-5M14 13.500l-2.500 2 2.500 2" strokeWidth="1.200" /></>} />
      </Row>
      <Row>
        <Half>
          <Cell $w={30}><Icon><SansText x={5} y={11} s={10}>あ</SansText><path d="M4.500 1v10M15.500 1v10" strokeDasharray="1 1" strokeWidth="1" /><path d="M0 14.500h6M4 12.500l2.500 2-2.500 2" strokeWidth="1.200" /></Icon></Cell>
          <Choice label="插入空格(左)" value="自动" w={75} />
        </Half>
        <Half>
          <Cell $w={30}><Icon><SansText x={3} y={11} s={10}>あ</SansText><path d="M2.500 1v10M13.500 1v10" strokeDasharray="1 1" strokeWidth="1" /><path d="M18 14.500h-6M14 12.500l-2.500 2 2.500 2" strokeWidth="1.200" /></Icon></Cell>
          <Choice label="插入空格(右)" value="自动" w={75} />
        </Half>
      </Row>
    </Section>
    <Section $t={3} $b={5}>
      <Row>
        <Measure label="基线偏移" value="0 pt" icon={<><SansText x={0} y={14} s={14}>A</SansText><SansText x={10} y={9} s={10}>a</SansText><path d="M0 15.500h9M14 17v-6M11.500 12.500l2.500-2 2.500 2" strokeWidth="1.200" /></>} />
        <Measure label="字符旋转" value="0°" icon={<><circle cx="9" cy="9" r="7.500" /><GlyphText x={5} y={13} s={12}>T</GlyphText></>} />
      </Row>
    </Section>
    <Section $t={0} $b={5}>
      <Between $l={8} $r={2} $h={22}>
        <IconButton $w={18} aria-label="全部大写字母"><Icon><GlyphText x={-1} y={14} s={15}>TT</GlyphText></Icon></IconButton>
        <IconButton $w={28} aria-label="小型大写字母"><Icon><GlyphText x={3} y={14} s={15}>T</GlyphText><GlyphText x={12} y={14} s={11}>T</GlyphText></Icon></IconButton>
        <IconButton $w={60} aria-label="上标"><Icon><GlyphText x={9} y={14} s={15}>T</GlyphText><GlyphText x={19} y={7} s={8}>1</GlyphText></Icon></IconButton>
        <IconButton $w={18} aria-label="下标"><Icon><GlyphText x={-5} y={14} s={15}>T</GlyphText><GlyphText x={5} y={16} s={8}>1</GlyphText></Icon></IconButton>
        <IconButton $w={50} aria-label="下划线"><Icon><GlyphText x={12} y={12} s={15}>T</GlyphText><path d="M12 15.500h11" /></Icon></IconButton>
        <IconButton $w={18} aria-label="删除线"><Icon><GlyphText x={4} y={14} s={15}>T</GlyphText><path d="M3 8.500h12" /></Icon></IconButton>
      </Between>
    </Section>
    <Section $t={0} $b={2}>
      <Row $pad={7}>
        <Choice label="语言" value="英语：美国" w={98} />
        <Cell $w={44}><Icon><SansText x={4} y={10} s={12}>a</SansText><SansText x={11} y={15} s={12}>a</SansText></Icon></Cell>
        <Choice label="消除锯齿" value="锐化" w={74} off />
      </Row>
    </Section>
    <Between $l={4} $r={5} $h={34}>
      <span>对齐字形</span>
      <Push>
        <IconButton $w={34} aria-label="字形选项"><Icon><SansText x={2} y={14} s={13}>A</SansText><SansText x={10} y={15} s={12}>g</SansText><path d="M11 16.500H1V2h10v3" strokeWidth="1" /></Icon></IconButton>
        <IconButton $w={30} aria-label="信息"><Icon><circle cx="13" cy="9" r="6.500" /><path d="M13 5v2M13 8v5M11 13h4" /></Icon></IconButton>
      </Push>
    </Between>
    <SnapRow>
      <IconButton $on aria-label="全角字框"><Icon><rect x="2" y="2" width="14" height="14" strokeWidth="1.200" /><SansText x={4} y={13} s={10}>あ</SansText></Icon></IconButton>
      <IconButton $on aria-label="全角字框居中"><Icon><rect x="2" y="2" width="14" height="14" strokeWidth="1.200" /><SansText x={4} y={13} s={10}>あ</SansText><path d="M0 9h18" strokeWidth="1" /></Icon></IconButton>
      <IconButton $on aria-label="字形边界"><Icon><rect x="0" y="1" width="18" height="15" strokeWidth="1" /><SansText x={1} y={14} s={13}>Ag</SansText></Icon></IconButton>
      <IconButton $on aria-label="基线"><Icon><SansText x={1} y={14} s={13}>Ax</SansText></Icon></IconButton>
      <Cell $w={1} />
      <IconButton $on aria-label="角度参考线"><Icon><SansText x={3} y={14} s={13}>A</SansText><path d="M10 3l5 12" /></Icon></IconButton>
      <IconButton $on aria-label="锚点"><Icon><SansText x={5} y={15} s={13}>A</SansText><circle cx="9.500" cy="3.500" r="1.700" fill="#262626" strokeWidth="1" /></Icon></IconButton>
    </SnapRow>
  </Floating>
);

const TransformPanel = () => (
  <Panel id="transform">
    <Tabs>
      <Tab $on $l={4} $r={8}><TabArrows />变换</Tab>
      <Tab $l={10} $r={12}>对齐</Tab>
      <TabMenu aria-label="面板菜单"><Burger /></TabMenu>
    </Tabs>
    <TransformBody>
      <Tall $w={20} $h={54}>
        <Icon w={20} h={20}>
          <path d="M3 3h14v14H3zM3 10h14M10 3v14" strokeWidth="1" />
          {[0, 7.5, 15].map((y) => [0, 7.5, 15].map((x) => (
            <rect key={`${x}-${y}`} x={x + 0.5} y={y + 0.5} width="4" height="4" strokeWidth="1.200" fill={x === 7.5 && y === 7.5 ? "#fff" : "#555"} />
          )))}
        </Icon>
      </Tall>
      <div>
        <Row>
          <FieldLabel $w={26}>X:</FieldLabel><Field label="X" value="84.648 mm" w={56} drop={false} />
          <WideLabel $w={32}>宽：</WideLabel><Field label="宽" value="121.356 mm" w={56} drop={false} />
        </Row>
        <Row>
          <FieldLabel $w={26}>Y:</FieldLabel><Field label="Y" value="71.893 mm" w={56} drop={false} />
          <WideLabel $w={32}>高：</WideLabel><Field label="高" value="20.323 mm" w={56} drop={false} />
        </Row>
        <Row>
          <FieldLabel $w={26}><Icon w={11} h={10}><path d="M10 1L1 9h10M6 4c2 1 2 3 2 5" strokeWidth="1.200" /></Icon>:</FieldLabel>
          <Field label="旋转" value="0°" w={56} />
          <FieldLabel $w={28}><Icon w={12} h={10}><path d="M5 0h6L7 10H1z" fill={F} stroke="none" /></Icon>:</FieldLabel>
          <Field label="倾斜" value="0°" w={52} />
        </Row>
      </div>
      <Tall $w={34} $h={54}>
        <Icon w={16} h={20}><path d="M5 9V5a3 3 0 016 0v3M5 12v3a3 3 0 006 0v-4M8 7v7M1 3l14 15" /></Icon>
      </Tall>
    </TransformBody>
    <Empty>无形状属性</Empty>
    <CheckList>
      <Check><input type="checkbox" />缩放圆角</Check>
      <Check><input type="checkbox" />缩放描边和效果</Check>
    </CheckList>
  </Panel>
);
const ColorPanel = () => (
  <Panel>
    <Tabs>
      <Tab $l={10} $r={10}>色板</Tab>
      <Tab $on $l={3} $r={8}><TabArrows />颜色</Tab>
      <Tab $l={9} $r={10}>颜色参考</Tab>
      <TabMenu aria-label="面板菜单"><Burger /></TabMenu>
    </Tabs>
    <ColorBody>
      <ColorTop>
        <NoneSwatch s={13} hole={false} /><Chip $c="#000" /><Chip $c="#fff" />
        <Push><FieldLabel $w={20}>#</FieldLabel><Field label="十六进制" value="000000" w={44} drop={false} /></Push>
      </ColorTop>
      <Spectrum />
    </ColorBody>
  </Panel>
);
const GradientPanel = () => (
  <Panel>
    <Tabs>
      <Tab $l={10} $r={10}>描边</Tab>
      <Tab $on $l={3} $r={8}><TabArrows />渐变</Tab>
      <TabMenu aria-label="面板菜单"><Burger /></TabMenu>
    </Tabs>
    <GradientBody>
      <GradientSide>
        <GradPreview><span /><Icon w={5} h={3}><path d="M0 0h5L2.500 3z" fill="#eee" stroke="none" /></Icon></GradPreview>
        <PaintSwatches />
        <Tall $w={24} $h={40}><Icon w={16} h={16} color="#9a9a9a"><path d="M1 1h6v5H1zM9 3h5M12 1l2 2-2 2M1 11h5M3 9l-2 2 2 2M8 9h6v6H8z" strokeWidth="1" /></Icon></Tall>
      </GradientSide>
      <div>
        <GradRow>
          <FieldLabel $w={61}><b>类型：</b></FieldLabel>
          <TypeSwatch aria-label="线性渐变" $bg="linear-gradient(90deg,#333,#eee)" />
          <TypeSwatch aria-label="径向渐变" $bg="radial-gradient(#ccc,#555)" />
          <TypeSwatch aria-label="任意形状渐变" $bg="linear-gradient(150deg,#333,#eee 50%,#444)" />
        </GradRow>
        <GradRow>
          <WideLabel $off $w={58}>描边：</WideLabel>
          <Icon w={66} h={16} color="#8c8c8c"><path d="M5 16V2h8M15 1v10M18 1v7M29 16V2h10M32 5h5M32 8h3M53 16V2h12M56 5h6v3h-6z" /></Icon>
        </GradRow>
        <GradRow>
          <FieldLabel $off $w={58}><Icon w={13} h={12} color="#bbb"><path d="M12 1L1 11h12M7 5c2 2 2 4 2 6" strokeWidth="1.200" /></Icon></FieldLabel>
          <Field off label="角度" value="" w={68} />
        </GradRow>
        <GradRow>
          <FieldLabel $off $w={58}><Icon w={16} h={14} color="#bbb"><path d="M2 2v9M0 2h4M0 11h4M6 14h10" strokeWidth="1.200" /><circle cx="11" cy="6.500" r="4" strokeWidth="1.200" /></Icon></FieldLabel>
          <Field off label="长宽比" value="" w={68} />
        </GradRow>
      </div>
    </GradientBody>
    <RampRow>
      <Ramp />
      <Icon w={10} h={12} color="#8f8f8f"><path d="M0 1h10M1.500 2v10h7V2M4 3v7M6 3v7" strokeWidth="1" /></Icon>
    </RampRow>
    <GradientFoot>
      <Tall $w={28} $h={52}><Icon color="#8f8f8f"><path d="M10 6L3 13l-1 3 3-1 7-7M9 4l5 5M12 6l4-4" strokeWidth="2" /></Icon></Tall>
      <div>
        <Row><WideLabel $off $w={70}>不透明度：</WideLabel><Field off label="不透明度" value="" w={68} /></Row>
        <Row><WideLabel $off $w={70}>位置：</WideLabel><Field off label="位置" value="" w={68} /></Row>
      </div>
    </GradientFoot>
  </Panel>
);

export default function App() {
  return (
    <Page>
      <GlobalStyle />
      <MenuBar>
        <AiMark $s={16}>Ai</AiMark>
        <IconButton $w={46} aria-label="主页">
          <Icon><path d="M9 1l9 8h-3v8h-4v-5H7v5H3V9H0z" fill="#eee" stroke="none" /></Icon>
        </IconButton>
        <Rule $m={1} />
        <Cluster $r={0}>
          <Cell $w={7} />
          {menus.map((m) => <MenuTitle key={m} $on={m === "窗口(W)"}>{m}</MenuTitle>)}
        </Cluster>
        <Push>
          <IconButton $w={22} aria-label="搜索"><Icon><circle cx="7.500" cy="7.500" r="5.500" strokeWidth="2" /><path d="M12 12l5 5" strokeWidth="2.500" /></Icon></IconButton>
          <Rule $m={11} />
          <IconButton $w={34} aria-label="排列文档"><Icon><path d="M0 3h8v12H0zM10 3h8v5h-8zM10 10h8v5h-8z" fill={F} stroke="none" /></Icon></IconButton>
          <IconButton $w={36} aria-label="工作区"><Icon w={17}><rect x="1" y="3" width="15" height="12" /><path d="M4 6h3v6H4z" fill={F} stroke="none" /></Icon></IconButton>
        </Push>
        <WindowKeys>
          <IconButton $w={34} aria-label="最小化"><Icon w={10} h={10}><path d="M0 6h10" strokeWidth="2" /></Icon></IconButton>
          <IconButton $w={22} aria-label="还原"><Icon w={12} h={12}><path d="M1 5h6v6H1zM4 5V1h7v6H7" /></Icon></IconButton>
          <IconButton $w={34} aria-label="关闭"><Icon w={10} h={10}><path d="M1 1l8 8M9 1L1 9" strokeWidth="2" /></Icon></IconButton>
        </WindowKeys>
      </MenuBar>

      <ControlBar>
        <ControlLeft>
          <ContextName>字符</ContextName>
          <Cluster $r={7}><Swatch /><DropMark><Chevron /></DropMark></Cluster>
          <Cluster $r={13}><NoneSwatch /><DropMark><Chevron /></DropMark></Cluster>
          <Cluster $r={7}>
            <LinkLabel>描边：</LinkLabel><Cell $w={21}><Stepper /></Cell><Field label="描边" value="" w={60} />
          </Cluster>
          <Cluster $r={8}><StyleBox /><DropMark><Chevron color="#7a7a7a" /></DropMark></Cluster>
          <LinkLabel>不透明度：</LinkLabel><Cell $w={3} /><Field label="不透明度" value="100%" w={60} />
        </ControlLeft>
        <Cluster $r={9}>
          <DropMark><Chevron /></DropMark>
          <Cell $w={22}><Stepper /></Cell>
          <Field label="字号" value="12 pt" w={60} />
        </Cluster>
        <Cluster $r={17}>
          <LinkLabel>段落：</LinkLabel><Cell $w={3} />
          <IconButton $on aria-label="文本左对齐"><Icon w={16} h={15}><path d="M0 1h16M0 4.500h10M0 8h16M0 11.500h10M0 15h16" stroke="#fff" /></Icon></IconButton>
          <IconButton aria-label="文本居中"><Icon w={16} h={15}><path d="M0 1h16M3 4.500h10M0 8h16M3 11.500h10M0 15h16" /></Icon></IconButton>
          <IconButton aria-label="文本右对齐"><Icon w={16} h={15}><path d="M0 1h16M6 4.500h10M0 8h16M6 11.500h10M0 15h16" /></Icon></IconButton>
        </Cluster>
        <Cluster $r={8}>
          <Icon><path d="M5 5h8l3 3v9H5z" fill="#8a8a8a" /><path d="M2 1v3M0 3h5M8 10h5M8 13h5" strokeWidth="1" /></Icon>
          <Icon w={12} h={6}><path d="M3 1l3 2.500L9 1" /></Icon>
        </Cluster>
        {alignShapes.map(([n, d], i) => (
          <Cluster key={n} $r={i === 2 ? 5 : 0}>
            <IconButton $w={26} aria-label={n}>
              <Icon><path d={d.split("|")[0]} strokeWidth="1" /><path d={d.split("|")[1]} fill={F} stroke="none" /></Icon>
            </IconButton>
          </Cluster>
        ))}
        <Cell $w={13} />
        <LinkLabel as="a" href="#transform">变换</LinkLabel>
        <Push>
          <Icon w={12} h={12} color="#8a8a8a"><path d="M0 2h4M7 2h4M0 10h4M7 10h4" strokeWidth="4" /></Icon>
          <Cell $w={8} />
          <IconButton $on $h={24} aria-label="吸附"><Icon w={14} h={14} color="#fff"><path d="M2 0v4M2 5v4M2 10v4" strokeWidth="4" /><path d="M6 4h4a3 3 0 010 6H6" strokeWidth="2.500" /></Icon></IconButton>
          <Cell $w={13}><Chevron /></Cell>
          <Cell $w={16} />
          <Icon w={12} h={10}><path d="M0 1h2M4 1h8M0 5h2M4 5h8M0 9h2M4 9h8" /></Icon>
          <Cell $w={18} />
        </Push>
      </ControlBar>

      <Workspace>
        <Toolbox aria-label="工具">
          <Strip><DoubleArrow /></Strip>
          <ToolTop><Grip /></ToolTop>
          <ToolList>
            {tools.map((t) => (
              <Tool key={t.n} $on={t.on} aria-label={t.n}><Icon>{t.d}</Icon>{t.more && <Corner />}</Tool>
            ))}
            <SmallPair>
              <Icon w={11} h={11}><path d="M4 4h6v6H4z" fill="#222" /><path d="M1 1h6v6H1z" fill="#fff" stroke="#222" strokeWidth="1" /></Icon>
              <Icon w={11} h={11}><path d="M3 3h3q3 0 3 4" strokeWidth="2" /><path d="M4 0v6L0 3zM6 7h6l-3 4z" fill={F} stroke="none" /></Icon>
            </SmallPair>
            <PaintSwatches />
            <Modes><span /><span /><NoneSwatch s={9} hole={false} /></Modes>
            <ModeTool $t={2} aria-label="绘图模式"><Icon w={12} h={12}><circle cx="4" cy="4" r="3.500" /><path d="M5 5h7v7H5z" fill={F} stroke="none" /></Icon></ModeTool>
            <ModeTool aria-label="屏幕模式"><Icon><path d="M1 6h9v9H1zM7 3h10v8H7z" fill="#777" /></Icon></ModeTool>
            <ModeTool $t={7} aria-label="编辑工具栏"><Icon w={14} h={4}><path d="M0 2h3M5.500 2h3M11 2h3" strokeWidth="3" /></Icon></ModeTool>
          </ToolList>
        </Toolbox>

        <Document>
          <DocTabs>
            <DocTab>
              <span>未标题-1* @ 159.66 % (RGB/CPU 预览)</span>
              <Icon w={7} h={7} color="#fff"><path d="M1 1l5 5M6 1L1 6" strokeWidth="2" /></Icon>
            </DocTab>
          </DocTabs>
          <DocArea>
            <Pasteboard>
              <Artboard>
                <PointText>滚滚长江东逝水</PointText>
                <AreaText>
                  {lines.map(([inset, pad], i) => <TextLine key={i} $in={inset} $pad={pad}>{verse}</TextLine>)}
                </AreaText>
                <Anchor />
                <Popup $x={779} $y={536} $w={271}><Entries list={typeEntries} faint /></Popup>
                <CharacterPanel />
              </Artboard>
            </Pasteboard>
            <VScroll>
              <Icon w={8} h={5} color="#aaa"><path d="M0 5l4-4 4 4" /></Icon>
              <Thumb $w={16} $h={25} $b={12} />
              <Icon w={8} h={5} color="#aaa"><path d="M0 0l4 4 4-4" /></Icon>
            </VScroll>
          </DocArea>
          <Status>
            <Field label="缩放" value="159.66%" w={68} />
            <Cell $w={2} /><Field label="旋转视图" value="0°" w={72} />
            <Cell $w={41}><Icon w={26} h={8} color="#858585"><path d="M1 0v8M8 0L3 4l5 4zM24 0l-5 4 5 4z" fill="#858585" strokeWidth="1" /></Icon></Cell>
            <Field label="画板" value="1" w={58} />
            <Cell $w={46}><Icon w={26} h={8} color="#858585"><path d="M2 0l5 4-5 4zM18 0l5 4-5 4zM25 0v8" fill="#858585" strokeWidth="1" /></Icon></Cell>
            <StatusHint>文字</StatusHint>
            <HScroll>
              <span />
              <Thumb $w={25} $h={15} $l={16} />
              <RightChevron color="#ccc" />
            </HScroll>
          </Status>
        </Document>

        <Dock>
          <Strip $right><DoubleArrow left /></Strip>
          <DockGroup>
            <Grip />
            <DockButton aria-label="字符样式"><Icon><SansText x={8} y={13} s={15}>A</SansText><path d="M1 9h7v7H1zM4 12h5v5H4z" /></Icon></DockButton>
            <DockButton aria-label="段落样式"><Icon><path d="M16 1v12M12.500 1v12M17 1h-5a3 3 0 000 6" strokeWidth="1.600" /><path d="M1 10h6v6H1zM4 12h5v5H4z" /></Icon></DockButton>
          </DockGroup>
          <DockGroup>
            <Grip />
            <DockButton aria-label="资源导出"><Icon><path d="M9 2H1v15h15V10" strokeWidth="2" /><path d="M11 1h6v6M9 9l7-7" strokeWidth="2" /></Icon></DockButton>
            <DockButton aria-label="链接"><Icon w={20} h={12}><path d="M9 9H5a3.500 3.500 0 010-7h4a3 3 0 013 3M11 2h4a3.500 3.500 0 010 7h-4a3 3 0 01-3-3" strokeWidth="2" /></Icon></DockButton>
          </DockGroup>
          <DockGroup>
            <Grip />
            <DockButton aria-label="注释"><Icon><path d="M2 1h14a2 2 0 012 2v7a2 2 0 01-2 2H9l-5 5v-5H2a2 2 0 01-2-2V3a2 2 0 012-2z" fill={F} stroke="none" /></Icon></DockButton>
          </DockGroup>
        </Dock>

        <Panels>
          <Strip $right><DoubleArrow /></Strip>
          <TransformPanel />
          <ColorPanel />
          <GradientPanel />
          <LayersPanel>
            <Tabs>
              <Tab $l={10} $r={10}>画板</Tab>
              <Tab $on $l={9} $r={11}>图层</Tab>
              <Tab $l={8} $r={8}>库</Tab>
              <TabMenu aria-label="面板菜单"><Burger /></TabMenu>
            </Tabs>
            <LayerRow>
              <Cell $w={20}><Icon w={12} h={8} color="#eee"><path d="M1 4q5-6 10 0q-5 6-10 0z" /><circle cx="6" cy="4" r="1.500" fill="#eee" /></Icon></Cell>
              <Cell $w={22} />
              <Bar />
              <Cell $w={18}><RightChevron color="#fff" /></Cell>
              <Cell $w={6} />
              <LayerThumb><i /></LayerThumb>
              <span>图层 1</span>
              <Push>
                <Icon w={8} h={8}><circle cx="4" cy="4" r="3.500" /></Icon>
                <Cell $w={24}><Icon w={6} h={6} color="#10107a"><rect width="6" height="6" fill="#7a9aff" /></Icon></Cell>
              </Push>
            </LayerRow>
            <LayerFoot>
              <span>1...</span>
              <Icon w={12} h={12}><path d="M6 2H1v9h9V7M5 7l6-6M7 1h4v4" /></Icon>
            </LayerFoot>
          </LayersPanel>
        </Panels>
      </Workspace>

      <Taskbar>
        <Apps>
          <AppButton aria-label="浏览器">
            <Icon w={22} h={22}><circle cx="11" cy="11" r="9" fill="#7ed63c" stroke="none" /><path d="M6 12h10a5 5 0 10-1 3" stroke="#fff" strokeWidth="2.200" /><path d="M1 19C0 14 12 2 21 2" stroke="#a6e35a" /></Icon>
            <Run $w={6} $c="transparent" />
          </AppButton>
          <AppButton aria-label="酷狗音乐">
            <Icon w={24} h={24}><rect width="24" height="24" rx="4" fill="#2b86e2" stroke="none" /><circle cx="12" cy="12" r="9" stroke="#fff" strokeWidth="1.800" /><path d="M9.500 7v10M15.500 7L11 12l4.500 5" stroke="#fff" strokeWidth="2.500" /></Icon>
            <Run $w={6} $c="transparent" />
          </AppButton>
          <AppButton $on aria-label="Illustrator"><AiMark $s={22}>Ai</AiMark><Run $w={16} $c="#1d7fd0" /></AppButton>
          <AppButton aria-label="录屏">
            <Icon w={26} h={24}><path d="M4 1h17l-7 17h-3z" fill="#3fc3e8" stroke="none" /><path d="M4 1h17l-2 5H6z" fill="#4a7fae" stroke="none" /><path d="M1.500 1v22M23.500 1v22" stroke="#8aa0b8" /><circle cx="27" cy="8" r="3" fill="#d0102a" stroke="none" /></Icon>
            <Run $w={6} $c="#8a8f9a" />
          </AppButton>
        </Apps>
        <Tray>
          <TrayItem $w={28} aria-label="显示隐藏的图标"><Icon w={12} h={7} color="#222"><path d="M1 6l5-5 5 5" /></Icon></TrayItem>
          <TrayItem $w={28} aria-label="麦克风"><Icon w={12} h={16} color="#2a6a9a"><rect x="3.500" y="1" width="5" height="9" rx="2.500" /><path d="M1 7a5 5 0 0010 0M6 12v3" /></Icon></TrayItem>
          <TrayItem $w={38}>中</TrayItem>
          <TrayItem $w={37}><Wubi>五</Wubi></TrayItem>
          <TrayItem $w={38} aria-label="网络"><Icon w={12} h={10} color="#222"><path d="M0 4q6-6 12 0M2.500 6.500q3.500-3.500 7 0" strokeWidth="1.200" /><circle cx="6" cy="8.500" r="1" fill="#222" /></Icon></TrayItem>
          <TrayItem $w={10} aria-label="音量"><Icon w={12} h={12} color="#222"><path d="M1 4h2.500L7 1v10L3.500 8H1zM9 3.500q2 2.500 0 5" strokeWidth="1.200" /></Icon></TrayItem>
          <Cell $w={6} />
          <Clock>15:13<br />2022/11/23</Clock>
          <Icon w={15} h={16}><path d="M1 12q2-1 2-6a4 4 0 018 0q0 5 2 6zM5 14h5v2H5z" fill="#1a1a2a" stroke="none" /><path d="M11 1h3l-3 3h3" stroke="#1a1a2a" strokeWidth="1" /><path d="M5.500 5h3l-3 4h3" stroke="#fff" strokeWidth="1" /></Icon>
        </Tray>
      </Taskbar>

      <Ime>
        <ImeMark>五</ImeMark>
        <span>中</span>
        <Icon w={12} h={12}><path d="M7 0a6 6 0 11-7 9Q7 9 7 0z" fill="#555" stroke="none" /></Icon>
        <Icon w={12} h={10} color="#888"><circle cx="2.500" cy="4" r="1.500" strokeWidth="1" /><path d="M9 3v2l-1 3" /></Icon>
        <Icon w={15} h={10} color="#666"><rect x=".5" y="1" width="14" height="8" strokeWidth="1" /><path d="M2 3.500h11M2 5.500h11M4 7.500h7" strokeDasharray="1 1" strokeWidth="1" /></Icon>
        <Icon w={12} h={12}><path d="M3 3a3 3 0 116 0 3 3 0 01-6 0zM0 12V7h12v5z" fill="#666" stroke="none" /></Icon>
        <Icon w={13} h={13} color="#555"><path d="M1.500 11.500L8 5" strokeWidth="3" /><path d="M12 3L9.500 4.500 8.500 3 11 1a3.500 3.500 0 10.500 5z" fill="#555" stroke="none" /></Icon>
      </Ime>

      <WindowMenu $x={523} $y={0} $w={405}>
        <ScrollHint><Icon w={12} h={6}><path d="M0 6l6-6 6 6z" fill="#bdbdbd" stroke="none" /></Icon></ScrollHint>
        <Entries list={entries} />
        <ScrollHint><Icon w={12} h={6}><path d="M0 0h12L6 6z" fill="#000" stroke="none" /></Icon></ScrollHint>
      </WindowMenu>

      <Pointer $x={587} $y={620} $w={32}>
        <Svg width="32" height="36" viewBox="0 0 32 36" aria-hidden="true">
          <circle cx="15" cy="15" r="15" fill="#8be9fb" opacity=".3" />
          <circle cx="15" cy="15" r="11" fill="#c8f5fd" stroke="#22c3e6" strokeWidth="3.500" />
          <circle cx="15" cy="15" r="5" fill="#35c8ea" />
          <path d="M15 16v16l4-3.500 3 6 2.500-1.200-3-5.800h5.500z" fill="#fff" stroke="#224" strokeWidth="1.200" />
        </Svg>
      </Pointer>
    </Page>
  );
}
